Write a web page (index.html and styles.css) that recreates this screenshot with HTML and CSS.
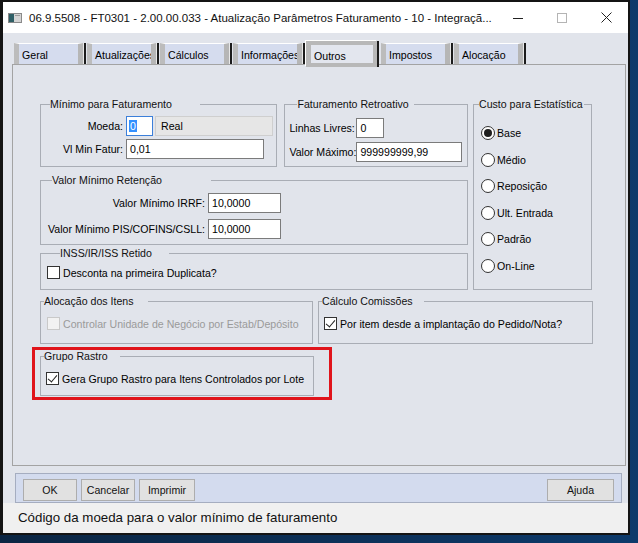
FILE: index.html
```html
<!DOCTYPE html>
<html lang="pt">
<head>
    <meta charset="UTF-8">
    <title>FT0301 - Atualização Parâmetros Faturamento</title>
    <link rel="stylesheet" href="styles.css">
</head>
<body>
<div class="window">
    <div class="titlebar">
        <svg class="app-icon" width="14" height="10" viewBox="0 0 14 10">
            <rect x="0.5" y="0.5" width="13" height="9" fill="#d4d4d4" stroke="#8a8a8a"/>
            <rect x="1" y="1" width="5" height="8" fill="#2f5f66"/>
            <rect x="7" y="2" width="5" height="1" fill="#9a9a9a"/>
        </svg>
        <span class="title">06.9.5508 - FT0301 - 2.00.00.033 - Atualização Parâmetros Faturamento - 10 - Integraçã...</span>
        <div class="caption">
            <span class="cap">
                <svg width="10" height="10" viewBox="0 0 10 10"><rect x="0" y="5" width="10" height="1" fill="#222"/></svg>
            </span>
            <span class="cap">
                <svg width="10" height="10" viewBox="0 0 10 10"><rect x="0.5" y="0.5" width="9" height="9" fill="none" stroke="#b4b4b4"/></svg>
            </span>
            <span class="cap">
                <svg width="11" height="11" viewBox="0 0 11 11"><path d="M0.5 0.5 L10.5 10.5 M10.5 0.5 L0.5 10.5" stroke="#222" stroke-width="1"/></svg>
            </span>
        </div>
    </div>

    <div class="client">
        <div class="tabs">
            <div class="tab">Geral</div>
            <div class="tab">Atualizações</div>
            <div class="tab">Cálculos</div>
            <div class="tab">Informações</div>
            <div class="tab tab-active">Outros</div>
            <div class="tab">Impostos</div>
            <div class="tab">Alocação</div>
        </div>

        <div class="panel">
            <div class="row-top">
                <div class="col-left">
                    <div class="row-pair">
                        <fieldset class="grp grp-minimo">
                            <legend>Mínimo para Faturamento</legend>
                            <div class="form-grid">
                                <label>Moeda:</label>
                                <div class="moeda">
                                    <div class="field field-focus"><span class="sel">0</span></div>
                                    <div class="display">Real</div>
                                </div>
                                <label>Vl Min Fatur:</label>
                                <div class="field field-fatur">0,01</div>
                            </div>
                        </fieldset>
                        <fieldset class="grp grp-retro">
                            <legend>Faturamento Retroativo</legend>
                            <div class="form-grid">
                                <label>Linhas Livres:</label>
                                <div class="field field-linhas">0</div>
                                <label>Valor Máximo:</label>
                                <div class="field field-max">999999999,99</div>
                            </div>
                        </fieldset>
                    </div>

                    <fieldset class="grp grp-retencao">
                        <legend>Valor Mínimo Retenção</legend>
                        <div class="form-grid">
                            <label>Valor Mínimo IRRF:</label>
                            <div class="field field-ret">10,0000</div>
                            <label>Valor Mínimo PIS/COFINS/CSLL:</label>
                            <div class="field field-ret">10,0000</div>
                        </div>
                    </fieldset>

                    <fieldset class="grp grp-inss">
                        <legend>INSS/IR/ISS Retido</legend>
                        <div class="check-row">
                            <span class="check"></span>
                            <span>Desconta na primeira Duplicata?</span>
                        </div>
                    </fieldset>
                </div>

                <fieldset class="grp grp-custo">
                    <legend>Custo para Estatística</legend>
                    <div class="radio-list">
                        <div class="radio-row"><span class="radio radio-on"></span>Base</div>
                        <div class="radio-row"><span class="radio"></span>Médio</div>
                        <div class="radio-row"><span class="radio"></span>Reposição</div>
                        <div class="radio-row"><span class="radio"></span>Ult. Entrada</div>
                        <div class="radio-row"><span class="radio"></span>Padrão</div>
                        <div class="radio-row"><span class="radio"></span>On-Line</div>
                    </div>
                </fieldset>
            </div>

            <div class="row-mid">
                <fieldset class="grp grp-alocacao">
                    <legend>Alocação dos Itens</legend>
                    <div class="check-row disabled">
                        <span class="check"></span>
                        <span>Controlar Unidade de Negócio por Estab/Depósito</span>
                    </div>
                </fieldset>
                <fieldset class="grp grp-calculo">
                    <legend>Cálculo Comissões</legend>
                    <div class="check-row">
                        <span class="check checked"></span>
                        <span>Por item desde a implantação do Pedido/Nota?</span>
                    </div>
                </fieldset>
            </div>

            <div class="highlight">
                <fieldset class="grp grp-rastro">
                    <legend>Grupo Rastro</legend>
                    <div class="check-row">
                        <span class="check checked"></span>
                        <span>Gera Grupo Rastro para Itens Controlados por Lote</span>
                    </div>
                </fieldset>
            </div>
        </div>

        <div class="buttonbar">
            <button class="btn">OK</button>
            <button class="btn">Cancelar</button>
            <button class="btn">Imprimir</button>
            <button class="btn btn-help">Ajuda</button>
        </div>

        <div class="statusbar">Código da moeda para o valor mínimo de faturamento</div>
    </div>
</div>
</body>
</html>
```

FILE: styles.css
```css
body {
    margin: 0;
    background: linear-gradient(90deg, #0b2542 0%, #0d3a6b 100%);
    font-family: "Liberation Sans", Arial, sans-serif;
    font-size: 10.6px;
    color: #000;
}
.window {
    width: 625px;
    height: 531px;
    border: 2px solid #141414;
    border-left-width: 3px;
    background: #fff;
}

/* title bar */
.titlebar {
    height: 31px;
    display: flex;
    align-items: center;
    background: #fff;
}
.app-icon {
    margin-left: 5px;
    flex: none;
}
.title {
    margin-left: 7px;
    font-size: 11.5px;
    white-space: nowrap;
    color: #111;
}
.caption {
    margin-left: auto;
    display: flex;
}
.cap {
    width: 44px;
    height: 31px;
    display: flex;
    align-items: center;
    justify-content: center;
}

/* client area */
.client {
    height: 500px;
    box-sizing: border-box;
    padding-top: 10px;
    background: #e1e4eb;
}
.tabs {
    display: flex;
    height: 21px;
    margin-left: 11px;
}
.tab {
    position: relative;
    width: 69px;
    height: 21px;
    margin-right: 4px;
    box-sizing: border-box;
    padding: 5px 0 0 3px;
    border-top: 1px solid #fff;
    border-left: 5px solid #bcbcbc;
    border-right: 5px solid #b6b6b6;
    background: #d5dcee;
    box-shadow: 1px 0 0 #e8e8e8, 3px 0 0 #1c1c1c;
    white-space: nowrap;
    overflow: hidden;
    line-height: 13px;
}
.tab-active {
    z-index: 1;
    width: 71px;
    height: 26px;
    margin-top: -2px;
    padding: 5px 0 0 3px;
    border: 4px solid #b8b8b8;
    border-left-width: 5px;
    background: #e3e6ee;
    box-shadow: -1px -1px 0 #fff, 2px 0 0 #1c1c1c;
}
.panel {
    width: 614px;
    height: 402px;
    margin-left: 9px;
    box-sizing: border-box;
    border: 1px solid #a3a3a3;
    background: #e1e4eb;
}

/* group boxes */
.grp {
    margin: 0;
    padding: 0;
    min-width: 0;
    box-sizing: border-box;
    border: 1px solid #a9adb5;
}
.grp legend {
    padding: 0;
    font-size: 10.6px;
    line-height: 13px;
    color: #111;
    white-space: nowrap;
}
.row-top {
    display: flex;
    gap: 5px;
    margin: 33px 0 0 27px;
}
.col-left {
    width: 428px;
    display: flex;
    flex-direction: column;
}
.row-pair {
    display: flex;
    gap: 7px;
}
.form-grid {
    display: grid;
    align-items: center;
}
.form-grid label {
    line-height: 13px;
    white-space: nowrap;
}
.field {
    height: 20px;
    box-sizing: border-box;
    border: 1px solid #7b7b7b;
    background: #fff;
    padding-left: 3px;
    line-height: 18px;
    white-space: nowrap;
}

.grp-minimo {
    width: 238px;
    padding: 5px 0 7px;
}
.grp-minimo legend {
    margin-left: 9px;
    padding-right: 28px;
}
.grp-minimo .form-grid {
    grid-template-columns: 82px auto;
    column-gap: 3px;
    row-gap: 3px;
}
.grp-minimo label,
.grp-retencao label {
    text-align: right;
}
.moeda {
    display: flex;
    gap: 2px;
}
.field-focus {
    width: 27px;
    border-color: #3c7fd9;
    padding-left: 2px;
}
.sel {
    background: #3390ff;
    color: #fff;
    padding: 0 1px;
}
.display {
    width: 118px;
    height: 20px;
    box-sizing: border-box;
    border: 1px solid #cfcfcf;
    background: #e6e6e6;
    padding-left: 5px;
    line-height: 18px;
}
.field-fatur {
    width: 138px;
}

.grp-retro {
    width: 184px;
    padding: 7px 0 4px;
}
.grp-retro legend {
    margin-left: 12px;
    padding-right: 5px;
}
.grp-retro .form-grid {
    grid-template-columns: 64px auto;
    column-gap: 3px;
    row-gap: 4px;
    margin-left: 4px;
}
.field-linhas {
    width: 28px;
}
.field-max {
    width: 106px;
}

.grp-retencao {
    margin-top: 7px;
    padding: 6px 0 5px;
}
.grp-retencao legend {
    margin-left: 11px;
    padding-right: 49px;
}
.grp-retencao .form-grid {
    grid-template-columns: 164px auto;
    column-gap: 3px;
    row-gap: 6px;
}
.field-ret {
    width: 73px;
}

.grp-inss {
    margin-top: 2px;
    padding: 6px 0 10px;
}
.grp-inss legend {
    margin-left: 19px;
    padding-right: 17px;
}

/* checkboxes and radios */
.check-row {
    display: flex;
    align-items: center;
    gap: 3px;
    height: 13px;
    margin-left: 6px;
    white-space: nowrap;
}
.check {
    position: relative;
    width: 13px;
    height: 13px;
    box-sizing: border-box;
    border: 1px solid #333;
    background: #fff;
    flex: none;
}
.check.checked::after {
    content: "";
    position: absolute;
    left: 3px;
    top: 0px;
    width: 4px;
    height: 8px;
    border: solid #222;
    border-width: 0 1px 1px 0;
    transform: rotate(40deg);
}
.check-row.disabled {
    color: #9a9a9a;
}
.check-row.disabled .check {
    border-color: #c9c9c9;
    background: #f2f2f2;
}

.grp-custo {
    width: 119px;
    padding: 15px 0 0;
}
.grp-custo legend {
    margin-left: 5px;
    padding-right: 1px;
}
.radio-list {
    display: flex;
    flex-direction: column;
    gap: 12.6px;
    margin-left: 7px;
}
.radio-row {
    display: flex;
    align-items: center;
    gap: 2px;
    height: 14px;
}
.radio {
    position: relative;
    width: 14px;
    height: 14px;
    box-sizing: border-box;
    border: 1px solid #333;
    border-radius: 50%;
    background: #fff;
}
.radio-on::after {
    content: "";
    position: absolute;
    left: 2px;
    top: 2px;
    width: 8px;
    height: 8px;
    border-radius: 50%;
    background: #1e1e1e;
}

.row-mid {
    display: flex;
    gap: 5px;
    margin: 5px 0 0 27px;
}
.grp-alocacao {
    width: 273px;
    padding: 9px 0 13px;
}
.grp-alocacao legend {
    margin-left: 3px;
    padding-right: 14px;
}
.grp-calculo {
    width: 275px;
    padding: 9px 0 13px;
}
.grp-calculo legend {
    margin-left: 3px;
    padding-right: 11px;
}
.grp-calculo .check-row {
    margin-left: 5px;
}

.highlight {
    width: 300px;
    margin: 3px 0 0 19px;
    box-sizing: border-box;
    border: 3px solid #e0141b;
    padding: 0 0 1px 5px;
}
.grp-rastro {
    width: 274px;
    padding: 9px 0 10px;
}
.grp-rastro legend {
    margin-left: 3px;
    padding-right: 12px;
}
.grp-rastro .check-row {
    margin-left: 5px;
}

/* buttons and status */
.buttonbar {
    display: flex;
    gap: 4px;
    width: 607px;
    height: 30px;
    margin: 7px 0 0 12px;
    box-sizing: border-box;
    padding: 5px 7px 0;
    border: 1px solid #a5adc0;
    background: #d3dbee;
}
.btn {
    height: 22px;
    width: 54px;
    padding: 0;
    border: 1px solid #adadad;
    background: #e1e1e1;
    font-family: "Liberation Sans", Arial, sans-serif;
    font-size: 10.6px;
    color: #111;
}
.btn:nth-child(3) {
    width: 56px;
}
.btn-help {
    margin-left: auto;
    width: 67px;
}
.statusbar {
    height: 30px;
    margin-top: 0;
    padding-left: 15px;
    background: #f0f0f0;
    font-size: 13.3px;
    line-height: 30px;
    color: #111;
}
```
